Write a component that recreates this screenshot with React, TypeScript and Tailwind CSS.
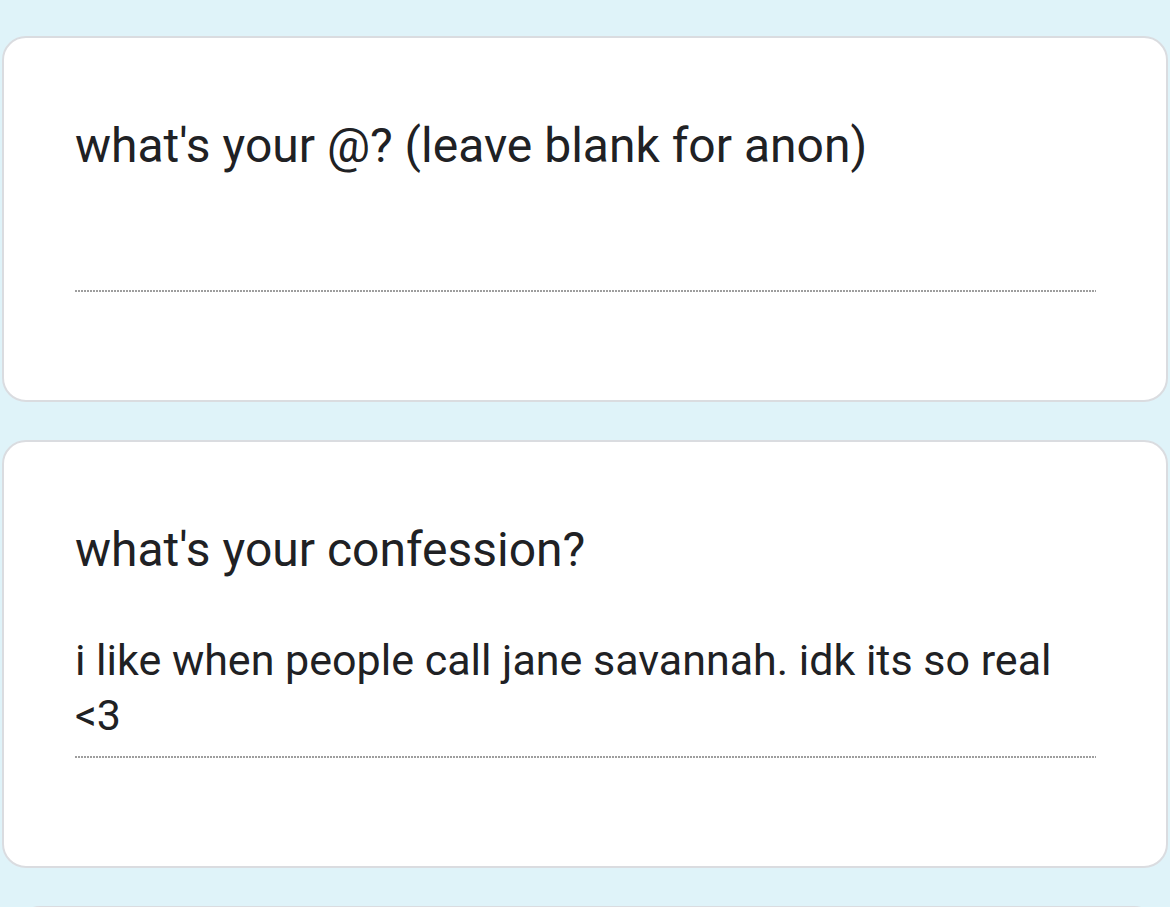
const dotted =
  "h-[2px] w-full bg-[repeating-linear-gradient(90deg,#9e9e9e_0_2px,transparent_2px_3px)]";

function Card({ title, answer }: { title: string; answer?: string }) {
  return (
    <div className="shrink-0 rounded-[24px] border-2 border-[#dadce0] bg-white pl-[71px] pr-[70px]">
      <div className="pt-[80px] text-[48px] leading-[56px] text-[#202124]">{title}</div>
      {answer ? (
        <div className="pt-[55px] pb-[13px] text-[43px] leading-[55px] text-[#202124]">{answer}</div>
      ) : (
        <div className="h-[116px]" />
      )}
      <div className={dotted} />
      <div className="h-[108px]" />
    </div>
  );
}

export default function App() {
  return (
    <div
      className="flex h-[907px] w-[1170px] flex-col gap-[38px] overflow-hidden bg-[#dff3f9] px-[2px] pt-[36px]"
      style={{ fontFamily: "Roboto, 'Noto Sans', sans-serif" }}
    >
      <Card title="what's your @? (leave blank for anon)" />
      <Card
        title="what's your confession?"
        answer="i like when people call jane savannah. idk its so real <3"
      />
      <div className="ml-[14px] mr-[10px] h-[80px] shrink-0 rounded-t-[24px] border-2 border-[#dadce0] bg-white" />
    </div>
  );
}
